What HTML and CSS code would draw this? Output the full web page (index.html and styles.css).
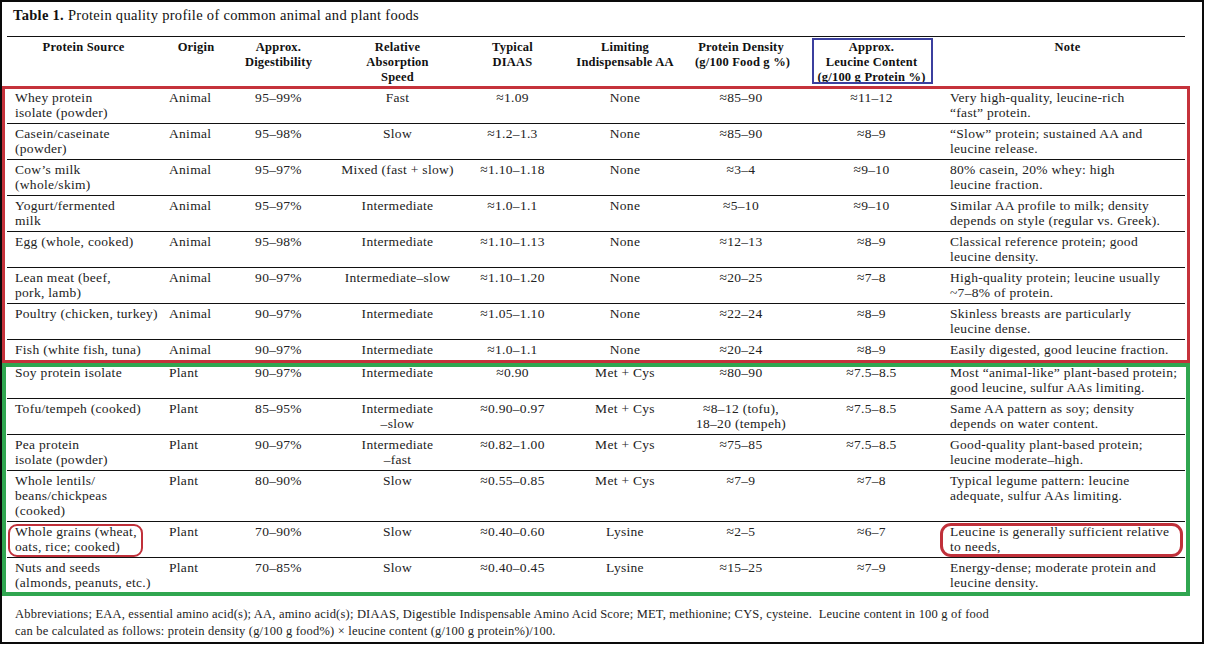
FILE: index.html
```html
<!DOCTYPE html>
<html>
<head>
<meta charset="utf-8">
<link rel="stylesheet" href="styles.css">
</head>
<body>
<div class="frame">
  <div class="title"><b>Table 1.</b> Protein quality profile of common animal and plant foods</div>
  <table class="tbl">
    <colgroup>
      <col class="c1"><col class="c2"><col class="c3"><col class="c4"><col class="c5"><col class="c6"><col class="c7"><col class="c8"><col class="c9">
    </colgroup>
    <thead>
      <tr>
        <th>Protein Source</th>
        <th>Origin</th>
        <th>Approx.<br>Digestibility</th>
        <th>Relative<br>Absorption<br>Speed</th>
        <th>Typical<br>DIAAS</th>
        <th>Limiting<br>Indispensable AA</th>
        <th>Protein Density<br>(g/100 Food g %)</th>
        <th class="leu">Approx.<br>Leucine Content<br>(g/100 g Protein %)</th>
        <th class="note">Note</th>
      </tr>
    </thead>
    <tbody>
      <tr><td class="src">Whey protein<br>isolate (powder)</td><td class="org">Animal</td><td>95–99%</td><td>Fast</td><td>≈1.09</td><td>None</td><td>≈85–90</td><td class="leu">≈11–12</td><td class="note">Very high-quality, leucine-rich<br>“fast” protein.</td></tr>
      <tr><td class="src">Casein/caseinate<br>(powder)</td><td class="org">Animal</td><td>95–98%</td><td>Slow</td><td>≈1.2–1.3</td><td>None</td><td>≈85–90</td><td class="leu">≈8–9</td><td class="note">“Slow” protein; sustained AA and<br>leucine release.</td></tr>
      <tr><td class="src">Cow’s milk<br>(whole/skim)</td><td class="org">Animal</td><td>95–97%</td><td>Mixed (fast + slow)</td><td>≈1.10–1.18</td><td>None</td><td>≈3–4</td><td class="leu">≈9–10</td><td class="note">80% casein, 20% whey: high<br>leucine fraction.</td></tr>
      <tr><td class="src">Yogurt/fermented<br>milk</td><td class="org">Animal</td><td>95–97%</td><td>Intermediate</td><td>≈1.0–1.1</td><td>None</td><td>≈5–10</td><td class="leu">≈9–10</td><td class="note">Similar AA profile to milk; density<br>depends on style (regular vs. Greek).</td></tr>
      <tr><td class="src">Egg (whole, cooked)</td><td class="org">Animal</td><td>95–98%</td><td>Intermediate</td><td>≈1.10–1.13</td><td>None</td><td>≈12–13</td><td class="leu">≈8–9</td><td class="note">Classical reference protein; good<br>leucine density.</td></tr>
      <tr><td class="src">Lean meat (beef,<br>pork, lamb)</td><td class="org">Animal</td><td>90–97%</td><td>Intermediate–slow</td><td>≈1.10–1.20</td><td>None</td><td>≈20–25</td><td class="leu">≈7–8</td><td class="note">High-quality protein; leucine usually<br>~7–8% of protein.</td></tr>
      <tr><td class="src">Poultry (chicken, turkey)</td><td class="org">Animal</td><td>90–97%</td><td>Intermediate</td><td>≈1.05–1.10</td><td>None</td><td>≈22–24</td><td class="leu">≈8–9</td><td class="note">Skinless breasts are particularly<br>leucine dense.</td></tr>
      <tr class="single"><td class="src">Fish (white fish, tuna)</td><td class="org">Animal</td><td>90–97%</td><td>Intermediate</td><td>≈1.0–1.1</td><td>None</td><td>≈20–24</td><td class="leu">≈8–9</td><td class="note">Easily digested, good leucine fraction.</td></tr>
      <tr><td class="src">Soy protein isolate</td><td class="org">Plant</td><td>90–97%</td><td>Intermediate</td><td>≈0.90</td><td>Met + Cys</td><td>≈80–90</td><td class="leu">≈7.5–8.5</td><td class="note">Most “animal-like” plant-based protein;<br>good leucine, sulfur AAs limiting.</td></tr>
      <tr><td class="src">Tofu/tempeh (cooked)</td><td class="org">Plant</td><td>85–95%</td><td>Intermediate<br>–slow</td><td>≈0.90–0.97</td><td>Met + Cys</td><td>≈8–12 (tofu),<br>18–20 (tempeh)</td><td class="leu">≈7.5–8.5</td><td class="note">Same AA pattern as soy; density<br>depends on water content.</td></tr>
      <tr><td class="src">Pea protein<br>isolate (powder)</td><td class="org">Plant</td><td>90–97%</td><td>Intermediate<br>–fast</td><td>≈0.82–1.00</td><td>Met + Cys</td><td>≈75–85</td><td class="leu">≈7.5–8.5</td><td class="note">Good-quality plant-based protein;<br>leucine moderate–high.</td></tr>
      <tr><td class="src">Whole lentils/<br>beans/chickpeas<br>(cooked)</td><td class="org">Plant</td><td>80–90%</td><td>Slow</td><td>≈0.55–0.85</td><td>Met + Cys</td><td>≈7–9</td><td class="leu">≈7–8</td><td class="note">Typical legume pattern: leucine<br>adequate, sulfur AAs limiting.</td></tr>
      <tr><td class="src">Whole grains (wheat,<br>oats, rice; cooked)</td><td class="org">Plant</td><td>70–90%</td><td>Slow</td><td>≈0.40–0.60</td><td>Lysine</td><td>≈2–5</td><td class="leu">≈6–7</td><td class="note">Leucine is generally sufficient relative<br>to needs,</td></tr>
      <tr class="last"><td class="src">Nuts and seeds<br>(almonds, peanuts, etc.)</td><td class="org">Plant</td><td>70–85%</td><td>Slow</td><td>≈0.40–0.45</td><td>Lysine</td><td>≈15–25</td><td class="leu">≈7–9</td><td class="note">Energy-dense; moderate protein and<br>leucine density.</td></tr>
    </tbody>
  </table>
  <div class="foot">Abbreviations; EAA, essential amino acid(s); AA, amino acid(s); DIAAS, Digestible Indispensable Amino Acid Score; MET, methionine; CYS, cysteine.&nbsp; Leucine content in 100 g of food<br>can be calculated as follows: protein density (g/100 g food%) × leucine content (g/100 g protein%)/100.</div>

  <div class="mark mark-blue"></div>
  <div class="mark mark-red"></div>
  <div class="mark mark-green"></div>
  <div class="mark ring ring-src"></div>
  <div class="mark ring ring-note"></div>
</div>
</body>
</html>
```

FILE: styles.css
```css
html, body {
  margin: 0;
  padding: 0;
  background: #fff;
}

body {
  font-family: "Liberation Serif", "Times New Roman", serif;
  color: #222;
}

.frame {
  position: relative;
  box-sizing: border-box;
  width: 1204px;
  height: 644px;
  border: 2px solid #0a0a0a;
  padding: 4px 0 0 5px;
}

.title {
  font-size: 14.5px;
  line-height: 18px;
  letter-spacing: 0.3px;
  padding-left: 6px;
  margin-bottom: 12px;
  color: #111;
}

.tbl {
  border-collapse: collapse;
  table-layout: fixed;
  width: 1178px;
  font-size: 13.5px;
  line-height: 15px;
  letter-spacing: 0.3px;
  border-top: 1px solid #111;
}

.c1 { width: 153px; }
.c2 { width: 72px; }
.c3 { width: 93px; }
.c4 { width: 145px; }
.c5 { width: 85px; }
.c6 { width: 140px; }
.c7 { width: 92px; }
.c8 { width: 157px; }
.c9 { width: 241px; }

.tbl th {
  font-size: 12.5px;
  font-weight: bold;
  line-height: 15px;
  letter-spacing: 0.2px;
  vertical-align: top;
  text-align: center;
  padding: 3px 0 2px;
  border-bottom: 1px solid #111;
  white-space: nowrap;
  color: #111;
}

.tbl td {
  vertical-align: top;
  text-align: center;
  padding: 2px 0 3px;
  border-bottom: 1px solid #111;
  white-space: nowrap;
}

.tbl tr.single td {
  padding-bottom: 5px;
}

.tbl tr.last td {
  border-bottom: none;
}

.tbl td.src {
  text-align: left;
  padding-left: 8px;
}

.tbl td.org {
  text-align: left;
  padding-left: 9px;
}

.tbl .leu {
  padding-left: 12px;
}

.tbl th.note {
  padding-left: 6px;
}

.tbl td.note {
  text-align: left;
  padding-left: 6px;
}

.foot {
  font-size: 12.5px;
  line-height: 17px;
  letter-spacing: 0.2px;
  padding-left: 8px;
  margin-top: 13px;
  color: #222;
}

.mark {
  position: absolute;
  box-sizing: border-box;
  pointer-events: none;
}

.mark-blue {
  left: 810px;
  top: 36px;
  width: 121px;
  height: 46px;
  border: 2px solid #3b3f9e;
}

.mark-red {
  left: 0;
  top: 84px;
  width: 1188px;
  height: 277px;
  border: 3px solid #c5323b;
}

.mark-green {
  left: 0;
  top: 361px;
  width: 1188px;
  height: 233px;
  border: 4px solid #30a650;
}

.ring {
  border: 2px solid #c0303a;
  border-radius: 9px;
}

.ring-src {
  left: 6px;
  top: 522px;
  width: 135px;
  height: 33px;
}

.ring-note {
  left: 938px;
  top: 521px;
  width: 243px;
  height: 34px;
  border-width: 3px;
  border-radius: 11px;
}
```
